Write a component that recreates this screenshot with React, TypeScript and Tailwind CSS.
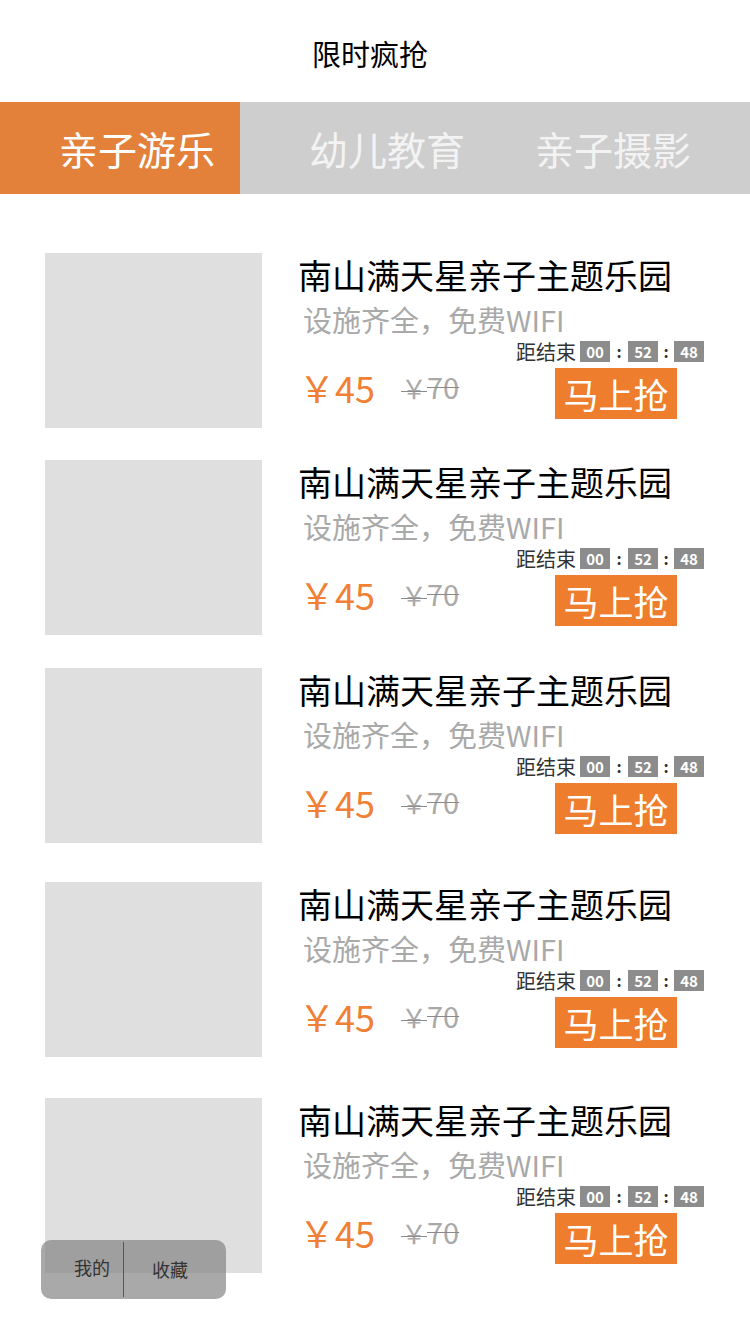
import React from "react";

const font = { fontFamily: '"Noto Sans CJK SC", "Noto Sans", sans-serif' };

const items = [
  { mt: "mt-[59px]" },
  { mt: "mt-[32px]" },
  { mt: "mt-[33px]" },
  { mt: "mt-[39px]" },
  { mt: "mt-[41px]" },
];

function Box({ t }: { t: string }) {
  return (
    <span className="w-[30px] h-[21px] bg-[#8c8c8c] text-white text-[15px] font-bold leading-[21px] text-center">
      {t}
    </span>
  );
}

function Item({ mt }: { mt: string }) {
  return (
    <div className={`${mt} flex pl-[45px]`}>
      <div className="w-[217px] h-[175px] bg-[#dfdfdf] shrink-0" />
      <div className="ml-[36px] w-[406px] flex flex-col">
        <div className="pt-[2px] text-[34px] leading-[40px] text-black whitespace-nowrap">
          南山满天星亲子主题乐园
        </div>
        <div className="mt-[6px] pl-[5px] text-[29px] leading-[36px] text-[#a9a9a9] whitespace-nowrap">
          设施齐全，免费WIFI
        </div>
        <div className="mt-[4px] flex justify-end items-center h-[21px]">
          <span className="text-[20px] text-[#333] leading-[21px] mr-[4px]">距结束</span>
          <Box t="00" />
          <span className="w-[18px] text-center text-[16px] font-bold text-[#333] leading-[21px]">:</span>
          <Box t="52" />
          <span className="w-[16px] text-center text-[16px] font-bold text-[#333] leading-[21px]">:</span>
          <Box t="48" />
        </div>
        <div className="mt-[6px] flex items-start">
          <div className="pl-[1px] mt-[-1px] flex items-center h-[40px]">
            <span className="text-[36px] leading-[40px] text-[#f08035] whitespace-nowrap">
              ￥45
            </span>
            <span className="ml-[26px] text-[29px] leading-[40px] text-[#a9a9a9] line-through decoration-1 decoration-[#8a8a8a] whitespace-nowrap">
              <span className="text-[26px]">￥</span>70
            </span>
          </div>
          <div className="ml-auto mr-[27px] w-[122px] h-[51px] bg-[#ef7d2e] text-white text-[35px] leading-[51px] text-center">
            马上抢
          </div>
        </div>
      </div>
    </div>
  );
}

export default function App() {
  return (
    <div className="w-[750px] min-h-[1334px] bg-white relative overflow-hidden" style={font}>
      <div className="h-[102px] flex items-center justify-center pt-[5px]">
        <span className="text-[29px] text-black mr-[10px]">限时疯抢</span>
      </div>
      <div className="h-[92px] flex bg-[#cecece]">
        <div className="w-[240px] bg-[#e3813a] flex items-center pl-[59px]">
          <span className="text-[39px] text-white whitespace-nowrap">亲子游乐</span>
        </div>
        <div className="flex items-center pl-[69px]">
          <span className="text-[39px] text-[#f3f3f3] whitespace-nowrap">幼儿教育</span>
        </div>
        <div className="flex items-center pl-[70px]">
          <span className="text-[39px] text-[#f3f3f3] whitespace-nowrap">亲子摄影</span>
        </div>
      </div>
      {items.map((it, i) => (
        <Item key={i} mt={it.mt} />
      ))}
      <div className="absolute left-[41px] top-[1240px] w-[185px] h-[59px] rounded-[10px] bg-[rgba(128,128,128,0.68)] flex items-stretch">
        <div className="w-[82px] flex items-center justify-end pr-[13px] text-[18px] text-[#333] pb-[4px]">我的</div>
        <div className="w-[1px] bg-[#555] my-[2px]" />
        <div className="flex-1 flex items-center pl-[28px] text-[18px] text-[#333]">收藏</div>
      </div>
    </div>
  );
}
